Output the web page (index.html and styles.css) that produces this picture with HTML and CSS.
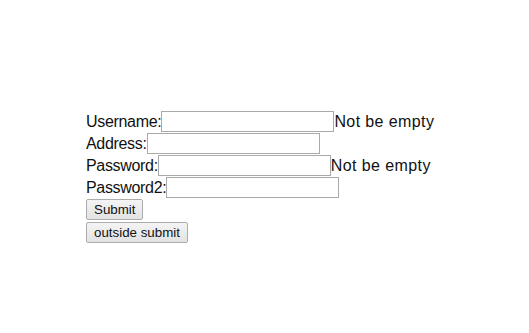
FILE: index.html
```html
<!DOCTYPE html>
<html>
<head>
<meta charset="utf-8">
<link rel="stylesheet" href="styles.css">
</head>
<body>
<div class="wrap">
  <form class="form">
    <div class="row">Username:<input class="field" type="text"><span class="msg">Not be empty</span></div>
    <div class="row">Address:<input class="field" type="text"></div>
    <div class="row">Password:<input class="field" type="password"><span class="msg">Not be empty</span></div>
    <div class="row">Password2:<input class="field" type="password"></div>
    <div class="row"><button class="btn" type="button">Submit</button></div>
  </form>
  <div class="row outside"><button class="btn" type="button">outside submit</button></div>
</div>
</body>
</html>
```
FILE: styles.css
```css
html, body {
  margin: 0;
  background: #ffffff;
}
body {
  font-family: "Liberation Sans", Arial, sans-serif;
  font-size: 16px;
  letter-spacing: -0.32px;
  color: #111111;
}
.wrap {
  padding: 111px 0 0 86px;
}
.form {
  margin: 0;
}
.row {
  height: 22px;
  line-height: 21px;
  white-space: nowrap;
}
.outside {
  margin-top: 1px;
}
.field {
  box-sizing: border-box;
  width: 173px;
  height: 21px;
  margin: 0;
  padding: 1px 2px;
  border: 1px solid #a9a9a9;
  border-radius: 0;
  font: 13px "Liberation Sans", Arial, sans-serif;
  letter-spacing: 0;
  vertical-align: top;
  background: #fff;
}
.msg {
  vertical-align: top;
  letter-spacing: 0.4px;
}
.btn {
  box-sizing: border-box;
  height: 21px;
  margin: 0;
  padding: 0 7px;
  border: 1px solid #adadad;
  border-radius: 2px;
  background: linear-gradient(#f4f4f4, #e2e2e2);
  font: 13.33px "Liberation Sans", Arial, sans-serif;
  letter-spacing: 0;
  color: #111;
  vertical-align: top;
}
```
